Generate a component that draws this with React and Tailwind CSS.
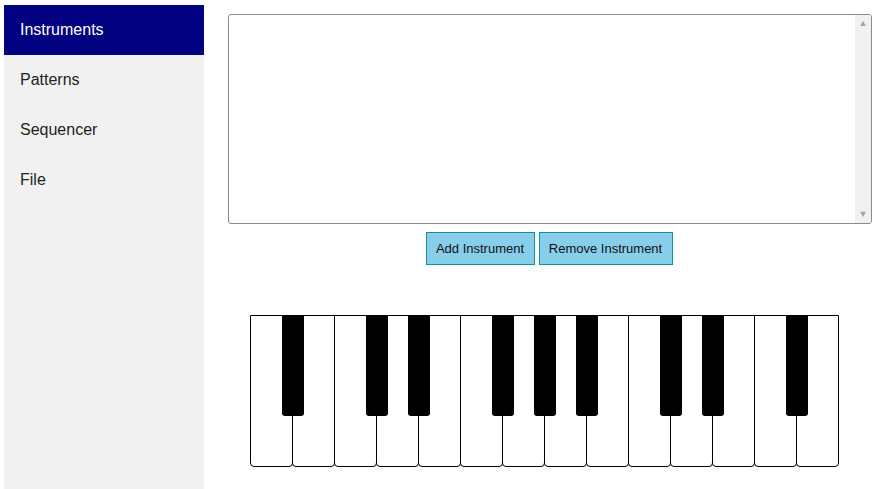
import React, { useState } from "react";

const menu = ["Instruments", "Patterns", "Sequencer", "File"];

// 14 white keys, starting on A
const whiteKeys = ["A", "B", "C", "D", "E", "F", "G", "A", "B", "C", "D", "E", "F", "G"];
// white-key boundaries that carry a black key
const blackAt = [1, 3, 4, 6, 7, 8, 10, 11, 13];

const Piano = () => (
  <div className="relative flex h-[152px] w-[589px]">
    {whiteKeys.map((k, i) => (
      <div
        key={i}
        className={`h-full w-[43px] shrink-0 rounded-b-[4px] border border-black bg-white ${
          i === 0 ? "" : "-ml-px"
        }`}
      />
    ))}
    {blackAt.map((b) => (
      <div
        key={b}
        className="absolute top-0 h-[101px] w-[22px] rounded-b-[3px] bg-black"
        style={{ left: b * 42 - 10 }}
      />
    ))}
  </div>
);

export default function App() {
  const [active, setActive] = useState("Instruments");

  return (
    <div
      className="flex h-[489px] w-[882px] overflow-hidden bg-white pl-[4px] pt-[5px] text-black"
      style={{ fontFamily: '"Liberation Sans", Arial, sans-serif' }}
    >
      <ul className="flex h-full w-[200px] shrink-0 flex-col bg-[#f1f1f1]">
        {menu.map((m) => (
          <li
            key={m}
            onClick={() => setActive(m)}
            className={`flex h-[50px] cursor-pointer items-center px-4 text-[16px] ${
              active === m ? "bg-[#000080] text-white" : "text-[#222]"
            }`}
          >
            {m}
          </li>
        ))}
      </ul>

      <div className="flex flex-1 flex-col items-center pt-[9px]">
        <div className="ml-[14px] flex h-[210px] w-[644px] overflow-hidden rounded-[3px] border border-[#8a8a8a] bg-white">
          <div className="flex-1" />
          <div className="flex w-[16px] flex-col items-center justify-between bg-[#f1f1f1] py-[4px] text-[9px] leading-none text-[#a3a3a3]">
            <span>▲</span>
            <span>▼</span>
          </div>
        </div>

        <div className="ml-[12px] mt-[8px] flex gap-[4px] text-[13px]">
          <button className="h-[33px] w-[109px] border border-[#0e9494] bg-[#87ceeb] text-[#111]">
            Add Instrument
          </button>
          <button className="h-[33px] w-[134px] border border-[#0e9494] bg-[#87ceeb] text-[#111]">
            Remove Instrument
          </button>
        </div>

        <div className="ml-[2px] mt-[50px]">
          <Piano />
        </div>
      </div>
    </div>
  );
}
